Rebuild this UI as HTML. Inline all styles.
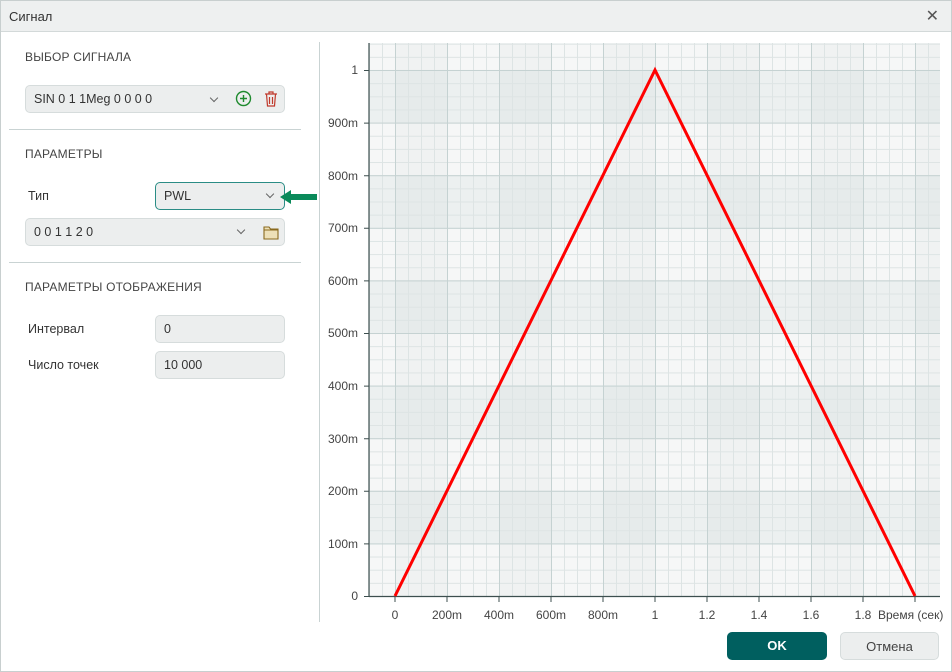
<!DOCTYPE html>
<html><head><meta charset="utf-8"><style>
*{box-sizing:border-box;margin:0;padding:0}
body{width:952px;height:672px;background:#fff;font-family:"Liberation Sans",sans-serif;color:#333;position:relative;overflow:hidden}
.frame{position:absolute;left:0;top:0;width:952px;height:672px;border:1px solid #c8cfcf}
.title{position:absolute;left:1px;top:1px;width:950px;height:31px;background:#eef0f0;border-bottom:1px solid #d3d9d9;font-size:13px;line-height:31px;padding-left:8px;color:#333}
.close{position:absolute;right:12px;top:0;font-size:16px;color:#555}
.h{position:absolute;font-size:12px;color:#444;letter-spacing:.2px}
.sep{position:absolute;left:9px;width:292px;height:1px;background:#c9d3d3}
.box{position:absolute;background:#eceeee;border:1px solid #d6dcdc;border-radius:5px;font-size:12.5px;line-height:26px;padding-left:8px;color:#333}
.lbl{position:absolute;font-size:12.5px;color:#333}
.chev{position:absolute;width:6px;height:6px;border-right:1.2px solid #666;border-bottom:1.2px solid #666;transform:rotate(45deg)}
.btn{position:absolute;top:632px;height:28px;border-radius:5px;font-size:13px;text-align:center;line-height:28px}
</style></head><body>
<div class="frame"></div>
<div class="title">Сигнал<span class="close">✕</span></div>
<div style="position:absolute;left:319px;top:42px;width:1px;height:580px;background:#c9d3d3"></div>

<div class="h" style="left:25px;top:50px">ВЫБОР СИГНАЛА</div>
<div class="box" style="left:25px;top:85px;width:260px;height:28px">SIN 0 1 1Meg 0 0 0 0</div>
<div class="chev" style="left:211px;top:95px"></div>
<svg style="position:absolute;left:235px;top:90px" width="18" height="18"><circle cx="8.5" cy="8.5" r="7" fill="none" stroke="#1e8a2e" stroke-width="1.4"/><path d="M8.5 5v7M5 8.5h7" stroke="#1e8a2e" stroke-width="1.4"/></svg>
<svg style="position:absolute;left:263px;top:90px" width="16" height="18"><path d="M2 4h12M6 4V2h4v2M3.5 4l1 12h7l1-12M6.5 7v7M9.5 7v7" fill="none" stroke="#c0392b" stroke-width="1.2"/></svg>
<div class="sep" style="top:129px"></div>

<div class="h" style="left:25px;top:147px">ПАРАМЕТРЫ</div>
<div class="lbl" style="left:28px;top:189px">Тип</div>
<div class="box" style="left:155px;top:182px;width:130px;height:28px;border-color:#2a8c85">PWL</div>
<div class="chev" style="left:267px;top:191px"></div>
<svg style="position:absolute;left:278px;top:188px" width="40" height="18"><path d="M2 9L13 2v4h26v6H13v4z" fill="#0a8a5a"/></svg>
<div class="box" style="left:25px;top:218px;width:260px;height:28px">0 0 1 1 2 0</div>
<div class="chev" style="left:238px;top:227px"></div>
<svg style="position:absolute;left:263px;top:224px" width="16" height="16"><path d="M1 3h5l1.5 2H15v10H1z" fill="#ede0b8" stroke="#8a6a1e" stroke-width="1.1"/><path d="M1 6h14" stroke="#8a6a1e" stroke-width="1"/></svg>
<div class="sep" style="top:262px"></div>

<div class="h" style="left:25px;top:280px">ПАРАМЕТРЫ ОТОБРАЖЕНИЯ</div>
<div class="lbl" style="left:28px;top:322px">Интервал</div>
<div class="box" style="left:155px;top:315px;width:130px;height:28px">0</div>
<div class="lbl" style="left:28px;top:358px">Число точек</div>
<div class="box" style="left:155px;top:351px;width:130px;height:28px">10 000</div>

<svg style="position:absolute;left:0;top:0" width="952" height="672" font-family="Liberation Sans,sans-serif" font-size="12" fill="#444">
<defs>
<pattern id="rows" patternUnits="userSpaceOnUse" x="0" y="543.4" width="1000" height="105.2"><rect width="1000" height="105.2" fill="#ecf0f0"/><rect width="1000" height="52.6" fill="#f6f7f7"/></pattern>
<pattern id="cols" patternUnits="userSpaceOnUse" x="395" y="0" width="104" height="1000"><rect width="52" height="1000" fill="#0a3030" fill-opacity="0.025"/></pattern>
<pattern id="mv" patternUnits="userSpaceOnUse" x="395" y="0" width="13" height="1000"><rect width="1" height="1000" fill="#dde4e4"/></pattern>
<pattern id="mh" patternUnits="userSpaceOnUse" x="0" y="596" width="1000" height="13.15"><rect width="1000" height="1" fill="#dde4e4"/></pattern>
<pattern id="Mv" patternUnits="userSpaceOnUse" x="395" y="0" width="52" height="1000"><rect width="1" height="1000" fill="#c5d2d2"/></pattern>
<pattern id="Mh" patternUnits="userSpaceOnUse" x="0" y="596" width="1000" height="52.6"><rect width="1000" height="1" fill="#c5d2d2"/></pattern>
</defs>
<rect x="369" y="43" width="571" height="553" fill="url(#rows)"/>
<rect x="369" y="43" width="571" height="553" fill="url(#cols)"/>
<rect x="369" y="43" width="571" height="553" fill="url(#mv)"/>
<rect x="369" y="43" width="571" height="553" fill="url(#mh)"/>
<rect x="369" y="43" width="571" height="553" fill="url(#Mv)"/>
<rect x="369" y="43" width="571" height="553" fill="url(#Mh)"/>
<line x1="369" y1="43" x2="369" y2="597" stroke="#3d4f4f" stroke-width="1.2"/>
<line x1="369" y1="596.5" x2="940" y2="596.5" stroke="#3d4f4f" stroke-width="1.2"/>
<g stroke="#3d4f4f">
<path d="M364 596.5h5M364 543.9h5M364 491.3h5M364 438.7h5M364 386.1h5M364 333.5h5M364 280.9h5M364 228.3h5M364 175.7h5M364 123.1h5M364 70.5h5"/>
<path d="M395 597v5M447 597v5M499 597v5M551 597v5M603 597v5M655 597v5M707 597v5M759 597v5M811 597v5M863 597v5M915 597v5"/>
</g>
<g text-anchor="end">
<text x="358" y="600">0</text><text x="358" y="548">100m</text><text x="358" y="495">200m</text><text x="358" y="443">300m</text><text x="358" y="390">400m</text><text x="358" y="337">500m</text><text x="358" y="285">600m</text><text x="358" y="232">700m</text><text x="358" y="180">800m</text><text x="358" y="127">900m</text><text x="358" y="74">1</text>
</g>
<g text-anchor="middle">
<text x="395" y="619">0</text><text x="447" y="619">200m</text><text x="499" y="619">400m</text><text x="551" y="619">600m</text><text x="603" y="619">800m</text><text x="655" y="619">1</text><text x="707" y="619">1.2</text><text x="759" y="619">1.4</text><text x="811" y="619">1.6</text><text x="863" y="619">1.8</text>
</g>
<text x="878" y="619">Время (сек)</text>
<polyline points="395,596 655,70 915,596" fill="none" stroke="#f00" stroke-width="3"/>
</svg>

<div class="btn" style="left:727px;width:100px;background:#005f5f;color:#fff;font-weight:bold">OK</div>
<div class="btn" style="left:840px;width:99px;background:#eceeee;border:1px solid #d6dcdc;color:#444">Отмена</div>
</body></html>
